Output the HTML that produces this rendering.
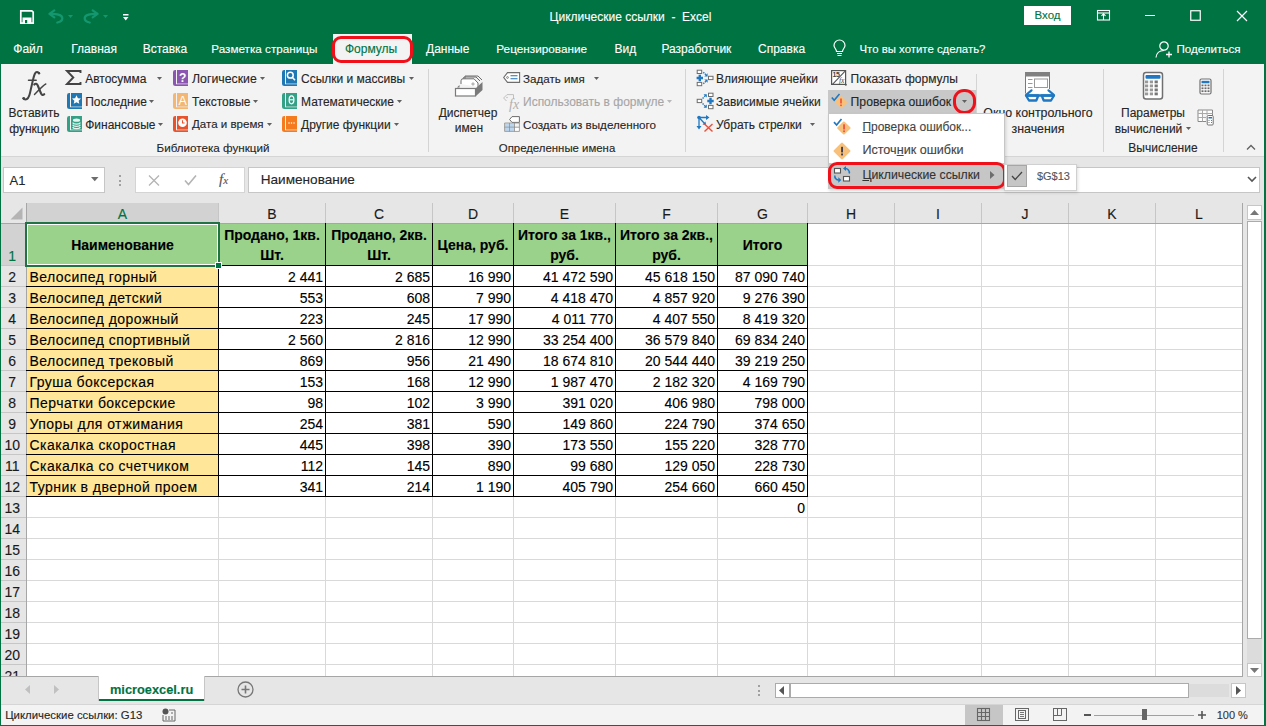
<!DOCTYPE html>
<html><head><meta charset="utf-8"><style>
html,body{margin:0;padding:0;}
body{width:1266px;height:726px;position:relative;overflow:hidden;background:#007342;font-family:"Liberation Sans",sans-serif;}
.t{position:absolute;white-space:nowrap;-webkit-text-stroke:0.12px currentColor;}
.r{position:absolute;}
svg.r{overflow:visible;}
</style></head><body>
<div class="t" style="top:8.50px;line-height:16px;font-size:12px;color:white;left:430.50px;width:400px;text-align:center;">Циклические ссылки&nbsp; -&nbsp; Excel</div>
<div class="r" style="left:1024px;top:6px;width:47px;height:19px;background:#ffffff;"></div>
<div class="t" style="top:8.00px;line-height:15px;font-size:11.5px;color:#007342;left:1024.00px;width:47px;text-align:center;">Вход</div>
<div class="r" style="left:333px;top:34px;width:79px;height:30px;background:#f3f3f3;"></div>
<div class="t" style="top:41.00px;line-height:16px;font-size:12px;color:white;left:13.30px;">Файл</div>
<div class="t" style="top:41.00px;line-height:16px;font-size:12px;color:white;left:71.30px;">Главная</div>
<div class="t" style="top:41.00px;line-height:16px;font-size:12px;color:white;left:142.70px;">Вставка</div>
<div class="t" style="top:41.00px;line-height:16px;font-size:11.7px;color:white;left:211.30px;">Разметка страницы</div>
<div class="t" style="top:41.00px;line-height:16px;font-size:12px;color:#007342;left:345.00px;">Формулы</div>
<div class="t" style="top:41.00px;line-height:16px;font-size:12px;color:white;left:426.00px;">Данные</div>
<div class="t" style="top:41.00px;line-height:16px;font-size:11.75px;color:white;left:496.30px;">Рецензирование</div>
<div class="t" style="top:41.00px;line-height:16px;font-size:12px;color:white;left:614.50px;">Вид</div>
<div class="t" style="top:41.00px;line-height:16px;font-size:12px;color:white;left:661.40px;">Разработчик</div>
<div class="t" style="top:41.00px;line-height:16px;font-size:12px;color:white;left:758.00px;">Справка</div>
<div class="t" style="top:41.50px;line-height:15px;font-size:11.4px;color:white;left:859.50px;">Что вы хотите сделать?</div>
<div class="t" style="top:41.00px;line-height:16px;font-size:11.6px;color:white;left:1176.50px;">Поделиться</div>
<div class="r" style="left:1px;top:64px;width:1263px;height:92px;background:#f3f3f3;"></div>
<div class="r" style="left:1px;top:156px;width:1263px;height:1px;background:#d5d5d5;"></div>
<div class="r" style="left:1px;top:157px;width:1263px;height:547px;background:#e6e6e6;"></div>
<div class="r" style="left:3px;top:167px;width:102px;height:26px;background:#ffffff;border:1px solid #c6c6c6;box-sizing:border-box;"></div>
<div class="t" style="top:171.80px;line-height:17px;font-size:13px;color:#262626;left:9.50px;">A1</div>
<div class="r" style="left:135px;top:167px;width:110px;height:26px;background:#ffffff;border:1px solid #d4d4d4;box-sizing:border-box;"></div>
<div class="r" style="left:248px;top:167px;width:1012px;height:26px;background:#ffffff;border:1px solid #c6c6c6;box-sizing:border-box;"></div>
<div class="t" style="top:171.30px;line-height:18px;font-size:13.6px;color:#262626;left:260.70px;">Наименование</div>
<div class="r" style="left:27px;top:224px;width:1215px;height:452px;background:#ffffff;"></div>
<div class="r" style="left:1px;top:203px;width:1242px;height:20px;background:#e6e6e6;"></div>
<div class="r" style="left:27px;top:203px;width:191px;height:20px;background:#d2d2d2;"></div>
<div class="r" style="left:1px;top:224px;width:25px;height:452px;background:#e6e6e6;"></div>
<div class="r" style="left:1px;top:224px;width:25px;height:41px;background:#d2d2d2;"></div>
<div class="r" style="left:218px;top:224px;width:1px;height:452px;background:#d9d9d9;"></div>
<div class="r" style="left:218px;top:203px;width:1px;height:20px;background:#c6c6c6;"></div>
<div class="r" style="left:325px;top:224px;width:1px;height:452px;background:#d9d9d9;"></div>
<div class="r" style="left:325px;top:203px;width:1px;height:20px;background:#c6c6c6;"></div>
<div class="r" style="left:432px;top:224px;width:1px;height:452px;background:#d9d9d9;"></div>
<div class="r" style="left:432px;top:203px;width:1px;height:20px;background:#c6c6c6;"></div>
<div class="r" style="left:513px;top:224px;width:1px;height:452px;background:#d9d9d9;"></div>
<div class="r" style="left:513px;top:203px;width:1px;height:20px;background:#c6c6c6;"></div>
<div class="r" style="left:615px;top:224px;width:1px;height:452px;background:#d9d9d9;"></div>
<div class="r" style="left:615px;top:203px;width:1px;height:20px;background:#c6c6c6;"></div>
<div class="r" style="left:717px;top:224px;width:1px;height:452px;background:#d9d9d9;"></div>
<div class="r" style="left:717px;top:203px;width:1px;height:20px;background:#c6c6c6;"></div>
<div class="r" style="left:807px;top:224px;width:1px;height:452px;background:#d9d9d9;"></div>
<div class="r" style="left:807px;top:203px;width:1px;height:20px;background:#c6c6c6;"></div>
<div class="r" style="left:894px;top:224px;width:1px;height:452px;background:#d9d9d9;"></div>
<div class="r" style="left:894px;top:203px;width:1px;height:20px;background:#c6c6c6;"></div>
<div class="r" style="left:981px;top:224px;width:1px;height:452px;background:#d9d9d9;"></div>
<div class="r" style="left:981px;top:203px;width:1px;height:20px;background:#c6c6c6;"></div>
<div class="r" style="left:1068px;top:224px;width:1px;height:452px;background:#d9d9d9;"></div>
<div class="r" style="left:1068px;top:203px;width:1px;height:20px;background:#c6c6c6;"></div>
<div class="r" style="left:1155px;top:224px;width:1px;height:452px;background:#d9d9d9;"></div>
<div class="r" style="left:1155px;top:203px;width:1px;height:20px;background:#c6c6c6;"></div>
<div class="r" style="left:1242px;top:224px;width:1px;height:452px;background:#d9d9d9;"></div>
<div class="r" style="left:1242px;top:203px;width:1px;height:20px;background:#c6c6c6;"></div>
<div class="r" style="left:26px;top:203px;width:1px;height:473px;background:#a6a6a6;"></div>
<div class="r" style="left:27px;top:265px;width:1215px;height:1px;background:#d9d9d9;"></div>
<div class="r" style="left:1px;top:265px;width:25px;height:1px;background:#c6c6c6;"></div>
<div class="r" style="left:27px;top:286px;width:1215px;height:1px;background:#d9d9d9;"></div>
<div class="r" style="left:1px;top:286px;width:25px;height:1px;background:#c6c6c6;"></div>
<div class="r" style="left:27px;top:307px;width:1215px;height:1px;background:#d9d9d9;"></div>
<div class="r" style="left:1px;top:307px;width:25px;height:1px;background:#c6c6c6;"></div>
<div class="r" style="left:27px;top:328px;width:1215px;height:1px;background:#d9d9d9;"></div>
<div class="r" style="left:1px;top:328px;width:25px;height:1px;background:#c6c6c6;"></div>
<div class="r" style="left:27px;top:349px;width:1215px;height:1px;background:#d9d9d9;"></div>
<div class="r" style="left:1px;top:349px;width:25px;height:1px;background:#c6c6c6;"></div>
<div class="r" style="left:27px;top:370px;width:1215px;height:1px;background:#d9d9d9;"></div>
<div class="r" style="left:1px;top:370px;width:25px;height:1px;background:#c6c6c6;"></div>
<div class="r" style="left:27px;top:391px;width:1215px;height:1px;background:#d9d9d9;"></div>
<div class="r" style="left:1px;top:391px;width:25px;height:1px;background:#c6c6c6;"></div>
<div class="r" style="left:27px;top:412px;width:1215px;height:1px;background:#d9d9d9;"></div>
<div class="r" style="left:1px;top:412px;width:25px;height:1px;background:#c6c6c6;"></div>
<div class="r" style="left:27px;top:433px;width:1215px;height:1px;background:#d9d9d9;"></div>
<div class="r" style="left:1px;top:433px;width:25px;height:1px;background:#c6c6c6;"></div>
<div class="r" style="left:27px;top:454px;width:1215px;height:1px;background:#d9d9d9;"></div>
<div class="r" style="left:1px;top:454px;width:25px;height:1px;background:#c6c6c6;"></div>
<div class="r" style="left:27px;top:475px;width:1215px;height:1px;background:#d9d9d9;"></div>
<div class="r" style="left:1px;top:475px;width:25px;height:1px;background:#c6c6c6;"></div>
<div class="r" style="left:27px;top:496px;width:1215px;height:1px;background:#d9d9d9;"></div>
<div class="r" style="left:1px;top:496px;width:25px;height:1px;background:#c6c6c6;"></div>
<div class="r" style="left:27px;top:517px;width:1215px;height:1px;background:#d9d9d9;"></div>
<div class="r" style="left:1px;top:517px;width:25px;height:1px;background:#c6c6c6;"></div>
<div class="r" style="left:27px;top:538px;width:1215px;height:1px;background:#d9d9d9;"></div>
<div class="r" style="left:1px;top:538px;width:25px;height:1px;background:#c6c6c6;"></div>
<div class="r" style="left:27px;top:559px;width:1215px;height:1px;background:#d9d9d9;"></div>
<div class="r" style="left:1px;top:559px;width:25px;height:1px;background:#c6c6c6;"></div>
<div class="r" style="left:27px;top:580px;width:1215px;height:1px;background:#d9d9d9;"></div>
<div class="r" style="left:1px;top:580px;width:25px;height:1px;background:#c6c6c6;"></div>
<div class="r" style="left:27px;top:601px;width:1215px;height:1px;background:#d9d9d9;"></div>
<div class="r" style="left:1px;top:601px;width:25px;height:1px;background:#c6c6c6;"></div>
<div class="r" style="left:27px;top:622px;width:1215px;height:1px;background:#d9d9d9;"></div>
<div class="r" style="left:1px;top:622px;width:25px;height:1px;background:#c6c6c6;"></div>
<div class="r" style="left:27px;top:643px;width:1215px;height:1px;background:#d9d9d9;"></div>
<div class="r" style="left:1px;top:643px;width:25px;height:1px;background:#c6c6c6;"></div>
<div class="r" style="left:27px;top:664px;width:1215px;height:1px;background:#d9d9d9;"></div>
<div class="r" style="left:1px;top:664px;width:25px;height:1px;background:#c6c6c6;"></div>
<div class="r" style="left:1px;top:223px;width:1242px;height:1px;background:#a6a6a6;"></div>
<div class="t" style="top:204.70px;line-height:19px;font-size:14px;color:#007342;left:82.50px;width:80px;text-align:center;">A</div>
<div class="t" style="top:204.70px;line-height:19px;font-size:14px;color:#1a1a1a;left:232.00px;width:80px;text-align:center;">B</div>
<div class="t" style="top:204.70px;line-height:19px;font-size:14px;color:#1a1a1a;left:339.00px;width:80px;text-align:center;">C</div>
<div class="t" style="top:204.70px;line-height:19px;font-size:14px;color:#1a1a1a;left:433.00px;width:80px;text-align:center;">D</div>
<div class="t" style="top:204.70px;line-height:19px;font-size:14px;color:#1a1a1a;left:524.50px;width:80px;text-align:center;">E</div>
<div class="t" style="top:204.70px;line-height:19px;font-size:14px;color:#1a1a1a;left:626.50px;width:80px;text-align:center;">F</div>
<div class="t" style="top:204.70px;line-height:19px;font-size:14px;color:#1a1a1a;left:722.50px;width:80px;text-align:center;">G</div>
<div class="t" style="top:204.70px;line-height:19px;font-size:14px;color:#1a1a1a;left:811.00px;width:80px;text-align:center;">H</div>
<div class="t" style="top:204.70px;line-height:19px;font-size:14px;color:#1a1a1a;left:898.00px;width:80px;text-align:center;">I</div>
<div class="t" style="top:204.70px;line-height:19px;font-size:14px;color:#1a1a1a;left:985.00px;width:80px;text-align:center;">J</div>
<div class="t" style="top:204.70px;line-height:19px;font-size:14px;color:#1a1a1a;left:1072.00px;width:80px;text-align:center;">K</div>
<div class="t" style="top:204.70px;line-height:19px;font-size:14px;color:#1a1a1a;left:1159.00px;width:80px;text-align:center;">L</div>
<div class="t" style="top:246.50px;line-height:19px;font-size:14px;color:#007342;left:0.20px;width:24px;text-align:center;">1</div>
<div class="t" style="top:267.80px;line-height:19px;font-size:14px;color:#1a1a1a;left:0.20px;width:24px;text-align:center;">2</div>
<div class="t" style="top:288.80px;line-height:19px;font-size:14px;color:#1a1a1a;left:0.20px;width:24px;text-align:center;">3</div>
<div class="t" style="top:309.80px;line-height:19px;font-size:14px;color:#1a1a1a;left:0.20px;width:24px;text-align:center;">4</div>
<div class="t" style="top:330.80px;line-height:19px;font-size:14px;color:#1a1a1a;left:0.20px;width:24px;text-align:center;">5</div>
<div class="t" style="top:351.80px;line-height:19px;font-size:14px;color:#1a1a1a;left:0.20px;width:24px;text-align:center;">6</div>
<div class="t" style="top:372.80px;line-height:19px;font-size:14px;color:#1a1a1a;left:0.20px;width:24px;text-align:center;">7</div>
<div class="t" style="top:393.80px;line-height:19px;font-size:14px;color:#1a1a1a;left:0.20px;width:24px;text-align:center;">8</div>
<div class="t" style="top:414.80px;line-height:19px;font-size:14px;color:#1a1a1a;left:0.20px;width:24px;text-align:center;">9</div>
<div class="t" style="top:435.80px;line-height:19px;font-size:14px;color:#1a1a1a;left:0.20px;width:24px;text-align:center;">10</div>
<div class="t" style="top:456.80px;line-height:19px;font-size:14px;color:#1a1a1a;left:0.20px;width:24px;text-align:center;">11</div>
<div class="t" style="top:477.80px;line-height:19px;font-size:14px;color:#1a1a1a;left:0.20px;width:24px;text-align:center;">12</div>
<div class="t" style="top:498.80px;line-height:19px;font-size:14px;color:#1a1a1a;left:0.20px;width:24px;text-align:center;">13</div>
<div class="t" style="top:519.80px;line-height:19px;font-size:14px;color:#1a1a1a;left:0.20px;width:24px;text-align:center;">14</div>
<div class="t" style="top:540.80px;line-height:19px;font-size:14px;color:#1a1a1a;left:0.20px;width:24px;text-align:center;">15</div>
<div class="t" style="top:561.80px;line-height:19px;font-size:14px;color:#1a1a1a;left:0.20px;width:24px;text-align:center;">16</div>
<div class="t" style="top:582.80px;line-height:19px;font-size:14px;color:#1a1a1a;left:0.20px;width:24px;text-align:center;">17</div>
<div class="t" style="top:603.80px;line-height:19px;font-size:14px;color:#1a1a1a;left:0.20px;width:24px;text-align:center;">18</div>
<div class="t" style="top:624.80px;line-height:19px;font-size:14px;color:#1a1a1a;left:0.20px;width:24px;text-align:center;">19</div>
<div class="t" style="top:645.80px;line-height:19px;font-size:14px;color:#1a1a1a;left:0.20px;width:24px;text-align:center;">20</div>
<div class="t" style="top:666.80px;line-height:19px;font-size:14px;color:#1a1a1a;left:0.20px;width:24px;text-align:center;">21</div>
<div class="r" style="left:27px;top:224px;width:781px;height:41px;background:#9ad18b;"></div>
<div class="r" style="left:27px;top:266px;width:191px;height:20px;background:#ffe699;"></div>
<div class="r" style="left:27px;top:287px;width:191px;height:20px;background:#ffe699;"></div>
<div class="r" style="left:27px;top:308px;width:191px;height:20px;background:#ffe699;"></div>
<div class="r" style="left:27px;top:329px;width:191px;height:20px;background:#ffe699;"></div>
<div class="r" style="left:27px;top:350px;width:191px;height:20px;background:#ffe699;"></div>
<div class="r" style="left:27px;top:371px;width:191px;height:20px;background:#ffe699;"></div>
<div class="r" style="left:27px;top:392px;width:191px;height:20px;background:#ffe699;"></div>
<div class="r" style="left:27px;top:413px;width:191px;height:20px;background:#ffe699;"></div>
<div class="r" style="left:27px;top:434px;width:191px;height:20px;background:#ffe699;"></div>
<div class="r" style="left:27px;top:455px;width:191px;height:20px;background:#ffe699;"></div>
<div class="r" style="left:27px;top:476px;width:191px;height:20px;background:#ffe699;"></div>
<div class="r" style="left:218px;top:223px;width:1px;height:274px;background:#000000;"></div>
<div class="r" style="left:325px;top:223px;width:1px;height:274px;background:#000000;"></div>
<div class="r" style="left:432px;top:223px;width:1px;height:274px;background:#000000;"></div>
<div class="r" style="left:513px;top:223px;width:1px;height:274px;background:#000000;"></div>
<div class="r" style="left:615px;top:223px;width:1px;height:274px;background:#000000;"></div>
<div class="r" style="left:717px;top:223px;width:1px;height:274px;background:#000000;"></div>
<div class="r" style="left:807px;top:223px;width:1px;height:274px;background:#000000;"></div>
<div class="r" style="left:26px;top:265px;width:782px;height:1px;background:#000000;"></div>
<div class="r" style="left:26px;top:286px;width:782px;height:1px;background:#000000;"></div>
<div class="r" style="left:26px;top:307px;width:782px;height:1px;background:#000000;"></div>
<div class="r" style="left:26px;top:328px;width:782px;height:1px;background:#000000;"></div>
<div class="r" style="left:26px;top:349px;width:782px;height:1px;background:#000000;"></div>
<div class="r" style="left:26px;top:370px;width:782px;height:1px;background:#000000;"></div>
<div class="r" style="left:26px;top:391px;width:782px;height:1px;background:#000000;"></div>
<div class="r" style="left:26px;top:412px;width:782px;height:1px;background:#000000;"></div>
<div class="r" style="left:26px;top:433px;width:782px;height:1px;background:#000000;"></div>
<div class="r" style="left:26px;top:454px;width:782px;height:1px;background:#000000;"></div>
<div class="r" style="left:26px;top:475px;width:782px;height:1px;background:#000000;"></div>
<div class="r" style="left:26px;top:496px;width:782px;height:1px;background:#000000;"></div>
<div class="t" style="top:268.00px;line-height:19px;font-size:14px;color:#000;letter-spacing:0.45px;left:29.50px;">Велосипед горный</div>
<div class="t" style="top:268.00px;line-height:19px;font-size:14px;color:#000;left:203.00px;width:120px;text-align:right;">2 441</div>
<div class="t" style="top:268.00px;line-height:19px;font-size:14px;color:#000;left:310.00px;width:120px;text-align:right;">2 685</div>
<div class="t" style="top:268.00px;line-height:19px;font-size:14px;color:#000;left:391.00px;width:120px;text-align:right;">16 990</div>
<div class="t" style="top:268.00px;line-height:19px;font-size:14px;color:#000;left:493.00px;width:120px;text-align:right;">41 472 590</div>
<div class="t" style="top:268.00px;line-height:19px;font-size:14px;color:#000;left:595.00px;width:120px;text-align:right;">45 618 150</div>
<div class="t" style="top:268.00px;line-height:19px;font-size:14px;color:#000;left:685.00px;width:120px;text-align:right;">87 090 740</div>
<div class="t" style="top:289.00px;line-height:19px;font-size:14px;color:#000;letter-spacing:0.45px;left:29.50px;">Велосипед детский</div>
<div class="t" style="top:289.00px;line-height:19px;font-size:14px;color:#000;left:203.00px;width:120px;text-align:right;">553</div>
<div class="t" style="top:289.00px;line-height:19px;font-size:14px;color:#000;left:310.00px;width:120px;text-align:right;">608</div>
<div class="t" style="top:289.00px;line-height:19px;font-size:14px;color:#000;left:391.00px;width:120px;text-align:right;">7 990</div>
<div class="t" style="top:289.00px;line-height:19px;font-size:14px;color:#000;left:493.00px;width:120px;text-align:right;">4 418 470</div>
<div class="t" style="top:289.00px;line-height:19px;font-size:14px;color:#000;left:595.00px;width:120px;text-align:right;">4 857 920</div>
<div class="t" style="top:289.00px;line-height:19px;font-size:14px;color:#000;left:685.00px;width:120px;text-align:right;">9 276 390</div>
<div class="t" style="top:310.00px;line-height:19px;font-size:14px;color:#000;letter-spacing:0.45px;left:29.50px;">Велосипед дорожный</div>
<div class="t" style="top:310.00px;line-height:19px;font-size:14px;color:#000;left:203.00px;width:120px;text-align:right;">223</div>
<div class="t" style="top:310.00px;line-height:19px;font-size:14px;color:#000;left:310.00px;width:120px;text-align:right;">245</div>
<div class="t" style="top:310.00px;line-height:19px;font-size:14px;color:#000;left:391.00px;width:120px;text-align:right;">17 990</div>
<div class="t" style="top:310.00px;line-height:19px;font-size:14px;color:#000;left:493.00px;width:120px;text-align:right;">4 011 770</div>
<div class="t" style="top:310.00px;line-height:19px;font-size:14px;color:#000;left:595.00px;width:120px;text-align:right;">4 407 550</div>
<div class="t" style="top:310.00px;line-height:19px;font-size:14px;color:#000;left:685.00px;width:120px;text-align:right;">8 419 320</div>
<div class="t" style="top:331.00px;line-height:19px;font-size:14px;color:#000;letter-spacing:0.45px;left:29.50px;">Велосипед спортивный</div>
<div class="t" style="top:331.00px;line-height:19px;font-size:14px;color:#000;left:203.00px;width:120px;text-align:right;">2 560</div>
<div class="t" style="top:331.00px;line-height:19px;font-size:14px;color:#000;left:310.00px;width:120px;text-align:right;">2 816</div>
<div class="t" style="top:331.00px;line-height:19px;font-size:14px;color:#000;left:391.00px;width:120px;text-align:right;">12 990</div>
<div class="t" style="top:331.00px;line-height:19px;font-size:14px;color:#000;left:493.00px;width:120px;text-align:right;">33 254 400</div>
<div class="t" style="top:331.00px;line-height:19px;font-size:14px;color:#000;left:595.00px;width:120px;text-align:right;">36 579 840</div>
<div class="t" style="top:331.00px;line-height:19px;font-size:14px;color:#000;left:685.00px;width:120px;text-align:right;">69 834 240</div>
<div class="t" style="top:352.00px;line-height:19px;font-size:14px;color:#000;letter-spacing:0.45px;left:29.50px;">Велосипед трековый</div>
<div class="t" style="top:352.00px;line-height:19px;font-size:14px;color:#000;left:203.00px;width:120px;text-align:right;">869</div>
<div class="t" style="top:352.00px;line-height:19px;font-size:14px;color:#000;left:310.00px;width:120px;text-align:right;">956</div>
<div class="t" style="top:352.00px;line-height:19px;font-size:14px;color:#000;left:391.00px;width:120px;text-align:right;">21 490</div>
<div class="t" style="top:352.00px;line-height:19px;font-size:14px;color:#000;left:493.00px;width:120px;text-align:right;">18 674 810</div>
<div class="t" style="top:352.00px;line-height:19px;font-size:14px;color:#000;left:595.00px;width:120px;text-align:right;">20 544 440</div>
<div class="t" style="top:352.00px;line-height:19px;font-size:14px;color:#000;left:685.00px;width:120px;text-align:right;">39 219 250</div>
<div class="t" style="top:373.00px;line-height:19px;font-size:14px;color:#000;letter-spacing:0.45px;left:29.50px;">Груша боксерская</div>
<div class="t" style="top:373.00px;line-height:19px;font-size:14px;color:#000;left:203.00px;width:120px;text-align:right;">153</div>
<div class="t" style="top:373.00px;line-height:19px;font-size:14px;color:#000;left:310.00px;width:120px;text-align:right;">168</div>
<div class="t" style="top:373.00px;line-height:19px;font-size:14px;color:#000;left:391.00px;width:120px;text-align:right;">12 990</div>
<div class="t" style="top:373.00px;line-height:19px;font-size:14px;color:#000;left:493.00px;width:120px;text-align:right;">1 987 470</div>
<div class="t" style="top:373.00px;line-height:19px;font-size:14px;color:#000;left:595.00px;width:120px;text-align:right;">2 182 320</div>
<div class="t" style="top:373.00px;line-height:19px;font-size:14px;color:#000;left:685.00px;width:120px;text-align:right;">4 169 790</div>
<div class="t" style="top:394.00px;line-height:19px;font-size:14px;color:#000;letter-spacing:0.45px;left:29.50px;">Перчатки боксерские</div>
<div class="t" style="top:394.00px;line-height:19px;font-size:14px;color:#000;left:203.00px;width:120px;text-align:right;">98</div>
<div class="t" style="top:394.00px;line-height:19px;font-size:14px;color:#000;left:310.00px;width:120px;text-align:right;">102</div>
<div class="t" style="top:394.00px;line-height:19px;font-size:14px;color:#000;left:391.00px;width:120px;text-align:right;">3 990</div>
<div class="t" style="top:394.00px;line-height:19px;font-size:14px;color:#000;left:493.00px;width:120px;text-align:right;">391 020</div>
<div class="t" style="top:394.00px;line-height:19px;font-size:14px;color:#000;left:595.00px;width:120px;text-align:right;">406 980</div>
<div class="t" style="top:394.00px;line-height:19px;font-size:14px;color:#000;left:685.00px;width:120px;text-align:right;">798 000</div>
<div class="t" style="top:415.00px;line-height:19px;font-size:14px;color:#000;letter-spacing:0.45px;left:29.50px;">Упоры для отжимания</div>
<div class="t" style="top:415.00px;line-height:19px;font-size:14px;color:#000;left:203.00px;width:120px;text-align:right;">254</div>
<div class="t" style="top:415.00px;line-height:19px;font-size:14px;color:#000;left:310.00px;width:120px;text-align:right;">381</div>
<div class="t" style="top:415.00px;line-height:19px;font-size:14px;color:#000;left:391.00px;width:120px;text-align:right;">590</div>
<div class="t" style="top:415.00px;line-height:19px;font-size:14px;color:#000;left:493.00px;width:120px;text-align:right;">149 860</div>
<div class="t" style="top:415.00px;line-height:19px;font-size:14px;color:#000;left:595.00px;width:120px;text-align:right;">224 790</div>
<div class="t" style="top:415.00px;line-height:19px;font-size:14px;color:#000;left:685.00px;width:120px;text-align:right;">374 650</div>
<div class="t" style="top:436.00px;line-height:19px;font-size:14px;color:#000;letter-spacing:0.45px;left:29.50px;">Скакалка скоростная</div>
<div class="t" style="top:436.00px;line-height:19px;font-size:14px;color:#000;left:203.00px;width:120px;text-align:right;">445</div>
<div class="t" style="top:436.00px;line-height:19px;font-size:14px;color:#000;left:310.00px;width:120px;text-align:right;">398</div>
<div class="t" style="top:436.00px;line-height:19px;font-size:14px;color:#000;left:391.00px;width:120px;text-align:right;">390</div>
<div class="t" style="top:436.00px;line-height:19px;font-size:14px;color:#000;left:493.00px;width:120px;text-align:right;">173 550</div>
<div class="t" style="top:436.00px;line-height:19px;font-size:14px;color:#000;left:595.00px;width:120px;text-align:right;">155 220</div>
<div class="t" style="top:436.00px;line-height:19px;font-size:14px;color:#000;left:685.00px;width:120px;text-align:right;">328 770</div>
<div class="t" style="top:457.00px;line-height:19px;font-size:14px;color:#000;letter-spacing:0.45px;left:29.50px;">Скакалка со счетчиком</div>
<div class="t" style="top:457.00px;line-height:19px;font-size:14px;color:#000;left:203.00px;width:120px;text-align:right;">112</div>
<div class="t" style="top:457.00px;line-height:19px;font-size:14px;color:#000;left:310.00px;width:120px;text-align:right;">145</div>
<div class="t" style="top:457.00px;line-height:19px;font-size:14px;color:#000;left:391.00px;width:120px;text-align:right;">890</div>
<div class="t" style="top:457.00px;line-height:19px;font-size:14px;color:#000;left:493.00px;width:120px;text-align:right;">99 680</div>
<div class="t" style="top:457.00px;line-height:19px;font-size:14px;color:#000;left:595.00px;width:120px;text-align:right;">129 050</div>
<div class="t" style="top:457.00px;line-height:19px;font-size:14px;color:#000;left:685.00px;width:120px;text-align:right;">228 730</div>
<div class="t" style="top:478.00px;line-height:19px;font-size:14px;color:#000;letter-spacing:0.45px;left:29.50px;">Турник в дверной проем</div>
<div class="t" style="top:478.00px;line-height:19px;font-size:14px;color:#000;left:203.00px;width:120px;text-align:right;">341</div>
<div class="t" style="top:478.00px;line-height:19px;font-size:14px;color:#000;left:310.00px;width:120px;text-align:right;">214</div>
<div class="t" style="top:478.00px;line-height:19px;font-size:14px;color:#000;left:391.00px;width:120px;text-align:right;">1 190</div>
<div class="t" style="top:478.00px;line-height:19px;font-size:14px;color:#000;left:493.00px;width:120px;text-align:right;">405 790</div>
<div class="t" style="top:478.00px;line-height:19px;font-size:14px;color:#000;left:595.00px;width:120px;text-align:right;">254 660</div>
<div class="t" style="top:478.00px;line-height:19px;font-size:14px;color:#000;left:685.00px;width:120px;text-align:right;">660 450</div>
<div class="t" style="top:499.00px;line-height:19px;font-size:14px;color:#000;left:745.00px;width:60px;text-align:right;">0</div>
<div class="t" style="top:235.50px;line-height:19px;font-size:14px;color:#000;font-weight:bold;left:27.50px;width:190px;text-align:center;">Наименование</div>
<div class="t" style="top:225.50px;line-height:19px;font-size:14px;color:#000;font-weight:bold;left:212.00px;width:120px;text-align:center;">Продано, 1кв.</div>
<div class="t" style="top:246.30px;line-height:19px;font-size:14px;color:#000;font-weight:bold;left:212.00px;width:120px;text-align:center;">Шт.</div>
<div class="t" style="top:225.50px;line-height:19px;font-size:14px;color:#000;font-weight:bold;left:319.00px;width:120px;text-align:center;">Продано, 2кв.</div>
<div class="t" style="top:246.30px;line-height:19px;font-size:14px;color:#000;font-weight:bold;left:319.00px;width:120px;text-align:center;">Шт.</div>
<div class="t" style="top:235.50px;line-height:19px;font-size:14px;color:#000;font-weight:bold;left:413.00px;width:120px;text-align:center;">Цена, руб.</div>
<div class="t" style="top:225.50px;line-height:19px;font-size:14px;color:#000;font-weight:bold;left:504.50px;width:120px;text-align:center;">Итого за 1кв.,</div>
<div class="t" style="top:246.30px;line-height:19px;font-size:14px;color:#000;font-weight:bold;left:504.50px;width:120px;text-align:center;">руб.</div>
<div class="t" style="top:225.50px;line-height:19px;font-size:14px;color:#000;font-weight:bold;left:606.50px;width:120px;text-align:center;">Итого за 2кв.,</div>
<div class="t" style="top:246.30px;line-height:19px;font-size:14px;color:#000;font-weight:bold;left:606.50px;width:120px;text-align:center;">руб.</div>
<div class="t" style="top:235.50px;line-height:19px;font-size:14px;color:#000;font-weight:bold;left:702.50px;width:120px;text-align:center;">Итого</div>
<div class="r" style="left:25px;top:222px;width:195px;height:45px;border:2px solid #217346;box-sizing:border-box;"></div>
<div class="r" style="left:27px;top:224px;width:191px;height:41px;border:1px solid #ffffff;box-sizing:border-box;"></div>
<div class="r" style="left:215px;top:262px;width:7px;height:7px;background:#ffffff;"></div>
<div class="r" style="left:216px;top:263px;width:5px;height:5px;background:#007342;"></div>
<div class="r" style="left:1242px;top:203px;width:1px;height:474px;background:#a6a6a6;"></div>
<div class="r" style="left:1px;top:676px;width:1242px;height:1px;background:#a6a6a6;"></div>
<div class="r" style="left:1px;top:677px;width:1263px;height:27px;background:#e6e6e6;"></div>
<div class="r" style="left:98px;top:676px;width:107px;height:25px;background:#ffffff;border:1px solid #c6c6c6;border-top:none;box-sizing:border-box;"></div>
<div class="r" style="left:99px;top:699px;width:105px;height:2px;background:#007342;"></div>
<div class="t" style="top:681.30px;line-height:17px;font-size:12.8px;color:#007342;font-weight:bold;left:98.10px;width:107px;text-align:center;">microexcel.ru</div>
<div class="r" style="left:1px;top:704px;width:1263px;height:21px;background:#f3f3f3;"></div>
<div class="r" style="left:1px;top:704px;width:1263px;height:1px;background:#d5d5d5;"></div>
<div class="t" style="top:707.90px;line-height:15px;font-size:11.4px;color:#262626;left:5.20px;">Циклические ссылки: G13</div>
<div class="r" style="left:965px;top:705px;width:38px;height:20px;background:#c6c6c6;"></div>
<div class="t" style="top:707.50px;line-height:15px;font-size:11px;color:#333;left:1216.70px;">100 %</div>
<div class="t" style="top:105.30px;line-height:16px;font-size:12px;color:#262626;left:4.00px;width:60px;text-align:center;">Вставить</div>
<div class="t" style="top:121.00px;line-height:16px;font-size:12px;color:#262626;left:4.30px;width:60px;text-align:center;">функцию</div>
<div class="t" style="top:71.40px;line-height:16px;font-size:12px;color:#262626;left:85.20px;">Автосумма</div>
<div class="t" style="top:94.00px;line-height:16px;font-size:12px;color:#262626;left:85.20px;">Последние</div>
<div class="t" style="top:116.60px;line-height:16px;font-size:12px;color:#262626;left:85.20px;">Финансовые</div>
<div class="t" style="top:71.40px;line-height:16px;font-size:12.3px;color:#262626;left:192.00px;">Логические</div>
<div class="t" style="top:94.00px;line-height:16px;font-size:12px;color:#262626;left:192.00px;">Текстовые</div>
<div class="t" style="top:117.10px;line-height:15px;font-size:11.55px;color:#262626;left:192.00px;">Дата и время</div>
<div class="t" style="top:71.40px;line-height:16px;font-size:12px;color:#262626;left:301.00px;">Ссылки и массивы</div>
<div class="t" style="top:94.00px;line-height:16px;font-size:12px;color:#262626;left:301.00px;">Математические</div>
<div class="t" style="top:116.60px;line-height:16px;font-size:12px;color:#262626;left:301.00px;">Другие функции</div>
<div class="t" style="top:140.00px;line-height:16px;font-size:11.65px;color:#262626;left:133.00px;width:160px;text-align:center;">Библиотека функций</div>
<svg class="r" style="left:156.5px;top:77.4px;" width="5" height="3" viewBox="0 0 5 3"><path d="M0 0H5L2.5 3Z" fill="#606060"/></svg>
<svg class="r" style="left:148.6px;top:100px;" width="5" height="3" viewBox="0 0 5 3"><path d="M0 0H5L2.5 3Z" fill="#606060"/></svg>
<svg class="r" style="left:158px;top:122.6px;" width="5" height="3" viewBox="0 0 5 3"><path d="M0 0H5L2.5 3Z" fill="#606060"/></svg>
<svg class="r" style="left:260px;top:77.4px;" width="5" height="3" viewBox="0 0 5 3"><path d="M0 0H5L2.5 3Z" fill="#606060"/></svg>
<svg class="r" style="left:253px;top:100px;" width="5" height="3" viewBox="0 0 5 3"><path d="M0 0H5L2.5 3Z" fill="#606060"/></svg>
<svg class="r" style="left:267.3px;top:122.6px;" width="5" height="3" viewBox="0 0 5 3"><path d="M0 0H5L2.5 3Z" fill="#606060"/></svg>
<svg class="r" style="left:408.9px;top:77.4px;" width="5" height="3" viewBox="0 0 5 3"><path d="M0 0H5L2.5 3Z" fill="#606060"/></svg>
<svg class="r" style="left:397px;top:100px;" width="5" height="3" viewBox="0 0 5 3"><path d="M0 0H5L2.5 3Z" fill="#606060"/></svg>
<svg class="r" style="left:394px;top:122.6px;" width="5" height="3" viewBox="0 0 5 3"><path d="M0 0H5L2.5 3Z" fill="#606060"/></svg>
<div class="r" style="left:428px;top:69px;width:1px;height:83px;background:#d4d4d4;"></div>
<div class="t" style="top:105.30px;line-height:16px;font-size:12px;color:#262626;left:433.00px;width:70px;text-align:center;">Диспетчер</div>
<div class="t" style="top:120.40px;line-height:16px;font-size:12px;color:#262626;left:434.00px;width:70px;text-align:center;">имен</div>
<div class="t" style="top:71.40px;line-height:16px;font-size:11.6px;color:#262626;left:523.00px;">Задать имя</div>
<div class="t" style="top:94.00px;line-height:16px;font-size:12px;color:#a6a6a6;left:523.00px;">Использовать в формуле</div>
<div class="t" style="top:116.60px;line-height:16px;font-size:11.65px;color:#262626;left:523.00px;">Создать из выделенного</div>
<svg class="r" style="left:594px;top:77.4px;" width="5" height="3" viewBox="0 0 5 3"><path d="M0 0H5L2.5 3Z" fill="#606060"/></svg>
<svg class="r" style="left:667px;top:100px;" width="5" height="3" viewBox="0 0 5 3"><path d="M0 0H5L2.5 3Z" fill="#b8b8b8"/></svg>
<div class="t" style="top:140.50px;line-height:15px;font-size:11.4px;color:#262626;left:477.00px;width:160px;text-align:center;">Определенные имена</div>
<div class="r" style="left:685px;top:69px;width:1px;height:83px;background:#d4d4d4;"></div>
<div class="t" style="top:71.00px;line-height:16px;font-size:12px;color:#262626;left:716.00px;">Влияющие ячейки</div>
<div class="t" style="top:93.60px;line-height:16px;font-size:12px;color:#262626;left:716.00px;">Зависимые ячейки</div>
<div class="t" style="top:116.50px;line-height:16px;font-size:12px;color:#262626;left:716.00px;">Убрать стрелки</div>
<svg class="r" style="left:810px;top:122.5px;" width="5" height="3" viewBox="0 0 5 3"><path d="M0 0H5L2.5 3Z" fill="#606060"/></svg>
<div class="t" style="top:71.00px;line-height:16px;font-size:12px;color:#262626;left:850.60px;">Показать формулы</div>
<div class="r" style="left:828px;top:90px;width:148px;height:23px;background:#c8c8c8;"></div>
<div class="t" style="top:93.60px;line-height:16px;font-size:12.2px;color:#262626;left:850.60px;">Проверка ошибок</div>
<svg class="r" style="left:962px;top:99.6px;" width="5" height="3" viewBox="0 0 5 3"><path d="M0 0H5L2.5 3Z" fill="#606060"/></svg>
<div class="r" style="left:976px;top:74px;width:1px;height:78px;background:#d4d4d4;"></div>
<div class="t" style="top:104.70px;line-height:17px;font-size:12.4px;color:#262626;left:978.00px;width:120px;text-align:center;">Окно контрольного</div>
<div class="t" style="top:120.70px;line-height:17px;font-size:12.4px;color:#262626;left:978.00px;width:120px;text-align:center;">значения</div>
<div class="r" style="left:1103px;top:69px;width:1px;height:83px;background:#d4d4d4;"></div>
<div class="t" style="top:105.00px;line-height:16px;font-size:12px;color:#262626;left:1108.00px;width:90px;text-align:center;">Параметры</div>
<div class="t" style="top:121.00px;line-height:16px;font-size:12px;color:#262626;left:1103.50px;width:90px;text-align:center;">вычислений</div>
<svg class="r" style="left:1186px;top:127px;" width="5" height="3" viewBox="0 0 5 3"><path d="M0 0H5L2.5 3Z" fill="#606060"/></svg>
<div class="t" style="top:139.80px;line-height:16px;font-size:12px;color:#262626;left:1118.00px;width:90px;text-align:center;">Вычисление</div>
<div class="r" style="left:1223px;top:69px;width:1px;height:83px;background:#d4d4d4;"></div>
<svg class="r" style="left:1246px;top:144px;" width="10" height="6" viewBox="0 0 10 6"><path d="M1 5.5L5 1.5L9 5.5" fill="none" stroke="#606060" stroke-width="1.3"/></svg>
<svg class="r" style="left:19px;top:9px;" width="16" height="16" viewBox="0 0 16 16"><path d="M1.8 1.8H12.8L14.2 3.2V14.2H1.8Z" fill="none" stroke="#fff" stroke-width="1.7"/><rect x="3.5" y="8.5" width="9" height="5.7" fill="#fff"/><rect x="6" y="11" width="2.2" height="3.2" fill="#007342"/></svg>
<svg class="r" style="left:47px;top:9px;" width="18" height="15" viewBox="0 0 18 15"><path d="M7.3 1.4L2.4 4.9L7.3 8.4" fill="none" stroke="#14976f" stroke-width="2.2" stroke-linejoin="round" stroke-linecap="round"/><path d="M3 4.9C9 4.6 15.3 5.8 15.3 9.2C15.3 11.4 13 12.9 10.3 13.5" fill="none" stroke="#14976f" stroke-width="2.3" stroke-linecap="round"/></svg>
<svg class="r" style="left:68px;top:14.8px;" width="6" height="4" viewBox="0 0 6 4"><path d="M0 0H5L2.5 3Z" fill="#14976f"/></svg>
<svg class="r" style="left:82px;top:9px;" width="18" height="15" viewBox="0 0 18 15"><path d="M10.7 1.4L15.6 4.9L10.7 8.4" fill="none" stroke="#14976f" stroke-width="2.2" stroke-linejoin="round" stroke-linecap="round"/><path d="M15 4.9C9 4.6 2.7 5.8 2.7 9.2C2.7 11.4 5 12.9 7.7 13.5" fill="none" stroke="#14976f" stroke-width="2.3" stroke-linecap="round"/></svg>
<svg class="r" style="left:103px;top:14.8px;" width="6" height="4" viewBox="0 0 6 4"><path d="M0 0H5L2.5 3Z" fill="#14976f"/></svg>
<svg class="r" style="left:122.5px;top:13.5px;" width="6" height="7" viewBox="0 0 6 7"><rect x="0" y="0" width="5.5" height="1.5" fill="#fff"/><path d="M0 2.9H5.5L2.75 6.6Z" fill="#fff"/></svg>
<svg class="r" style="left:1097px;top:10px;" width="14" height="11" viewBox="0 0 14 11"><rect x="0.5" y="0.5" width="12" height="9.5" fill="none" stroke="#fff" stroke-width="1.1"/><path d="M0.5 3H12.5" stroke="#fff" stroke-width="1.1"/><path d="M6.5 3.2V10M4.5 5.8L6.5 3.8L8.5 5.8" fill="none" stroke="#fff" stroke-width="1.1"/></svg>
<div class="r" style="left:1145px;top:15px;width:10px;height:1px;background:#ffffff;"></div>
<svg class="r" style="left:1190px;top:10px;" width="11" height="11" viewBox="0 0 11 11"><rect x="0.75" y="0.75" width="9.5" height="9.5" fill="none" stroke="#fff" stroke-width="1.2"/></svg>
<svg class="r" style="left:1236px;top:10px;" width="12" height="12" viewBox="0 0 12 12"><path d="M1 1L11 11M11 1L1 11" stroke="#fff" stroke-width="1.2"/></svg>
<svg class="r" style="left:832px;top:40px;" width="15" height="17" viewBox="0 0 15 17"><path d="M4.5 11.5C4.5 9 2 8 2 5.5A5.5 5.5 0 0 1 13 5.5C13 8 10.5 9 10.5 11.5Z" fill="none" stroke="#fff" stroke-width="1.2"/><path d="M5 13.5H10M5.5 15.5H9.5" stroke="#fff" stroke-width="1.2"/></svg>
<svg class="r" style="left:1155px;top:41px;" width="19" height="17" viewBox="0 0 19 17"><circle cx="9" cy="5" r="4.2" fill="none" stroke="#fff" stroke-width="1.2"/><path d="M1 16.5C1.5 12 4.5 9.5 9 9.5" fill="none" stroke="#fff" stroke-width="1.2"/><path d="M14 10.5V16.5M11 13.5H17" stroke="#fff" stroke-width="1.3"/></svg>
<svg class="r" style="left:18px;top:68px;" width="32" height="36" viewBox="0 0 32 36"><g fill="none" stroke="#444" stroke-linecap="round"><path d="M21 5C20 3.5 18 3.5 17 5.5C16 7.5 15.3 10.5 14.6 13.5L12 25C11.2 28.5 10 31.5 7.5 31.5C6.3 31.5 5.5 31 5.3 30.5" stroke-width="2"/><path d="M10.5 12.2H18.2" stroke-width="1.5"/><path d="M16.3 16.5C17.5 15.2 18.9 15.6 19.7 17.4L23 25.4C23.8 27.2 25 27.4 26.2 26.2" stroke-width="2.2"/><path d="M27.8 16C26.3 16.5 21.3 21.5 16.5 26.5" stroke-width="1.4"/></g><circle cx="5.8" cy="30.3" r="1.3" fill="#444"/><circle cx="21" cy="5.3" r="1.2" fill="#444"/></svg>
<svg class="r" style="left:66px;top:70px;" width="16" height="16" viewBox="0 0 16 16"><path d="M14.5 3V1H1L7.3 7.5L1 14H14.5V12" fill="none" stroke="#444" stroke-width="1.9" stroke-linejoin="miter"/></svg>
<svg class="r" style="left:67px;top:93px;" width="15" height="16" viewBox="0 0 15 16"><path d="M3 0V14.3H15V16H2.5A2.5 2.5 0 0 1 0 13.5V2.2A2.2 2.2 0 0 1 2.2 0Z" fill="#1f78b4"/><rect x="4" y="0" width="11" height="13.6" fill="#1f78b4"/><path d="M9.5 2.3L10.9 5.3L14 5.6L11.6 7.7L12.3 10.8L9.5 9.2L6.7 10.8L7.4 7.7L5 5.6L8.1 5.3Z" fill="#fff"/></svg>
<svg class="r" style="left:66.5px;top:116px;" width="15" height="16" viewBox="0 0 15 16"><path d="M3 0V14.3H15V16H2.5A2.5 2.5 0 0 1 0 13.5V2.2A2.2 2.2 0 0 1 2.2 0Z" fill="#34a086"/><rect x="4" y="0" width="11" height="13.6" fill="#34a086"/><ellipse cx="9.5" cy="4.2" rx="3.6" ry="1.6" fill="#e8f4ef"/><path d="M5.9 6.5A3.6 1.6 0 0 0 13.1 6.5M5.9 8.8A3.6 1.6 0 0 0 13.1 8.8M5.9 11A3.6 1.6 0 0 0 13.1 11" fill="none" stroke="#e8f4ef" stroke-width="1.2"/></svg>
<svg class="r" style="left:173px;top:70px;" width="15" height="16" viewBox="0 0 15 16"><path d="M3 0V14.3H15V16H2.5A2.5 2.5 0 0 1 0 13.5V2.2A2.2 2.2 0 0 1 2.2 0Z" fill="#8b56b0"/><rect x="4" y="0" width="11" height="13.6" fill="#8b56b0"/><text x="9.6" y="11.5" text-anchor="middle" font-family="Liberation Sans" font-weight="bold" font-size="12" fill="#fff">?</text></svg>
<svg class="r" style="left:173px;top:93px;" width="15" height="16" viewBox="0 0 15 16"><path d="M3 0V14.3H15V16H2.5A2.5 2.5 0 0 1 0 13.5V2.2A2.2 2.2 0 0 1 2.2 0Z" fill="#f3b773"/><rect x="4" y="0" width="11" height="13.6" fill="#f3b773"/><text x="9.6" y="11.6" text-anchor="middle" font-family="Liberation Sans" font-size="12.5" fill="#fff">A</text></svg>
<svg class="r" style="left:173px;top:116px;" width="15" height="16" viewBox="0 0 15 16"><path d="M3 0V14.3H15V16H2.5A2.5 2.5 0 0 1 0 13.5V2.2A2.2 2.2 0 0 1 2.2 0Z" fill="#e9532b"/><rect x="4" y="0" width="11" height="13.6" fill="#e9532b"/><circle cx="9.5" cy="6.8" r="4.3" fill="#fff"/><path d="M9.5 4.3V7H11.6" fill="none" stroke="#e9532b" stroke-width="1.1"/></svg>
<svg class="r" style="left:282px;top:70px;" width="15" height="16" viewBox="0 0 15 16"><path d="M3 0V14.3H15V16H2.5A2.5 2.5 0 0 1 0 13.5V2.2A2.2 2.2 0 0 1 2.2 0Z" fill="#1f78b4"/><rect x="4" y="0" width="11" height="13.6" fill="#1f78b4"/><circle cx="8.3" cy="5.2" r="2.9" fill="none" stroke="#fff" stroke-width="1.5"/><path d="M10.3 7.3L13 10.2" stroke="#fff" stroke-width="1.6"/></svg>
<svg class="r" style="left:282px;top:93px;" width="15" height="16" viewBox="0 0 15 16"><path d="M3 0V14.3H15V16H2.5A2.5 2.5 0 0 1 0 13.5V2.2A2.2 2.2 0 0 1 2.2 0Z" fill="#34a086"/><rect x="4" y="0" width="11" height="13.6" fill="#34a086"/><ellipse cx="9.5" cy="6.8" rx="2.4" ry="4" fill="none" stroke="#fff" stroke-width="1.2"/><path d="M7.1 6.8H11.9" stroke="#fff" stroke-width="1.1"/></svg>
<svg class="r" style="left:282px;top:116px;" width="15" height="16" viewBox="0 0 15 16"><path d="M3 0V14.3H15V16H2.5A2.5 2.5 0 0 1 0 13.5V2.2A2.2 2.2 0 0 1 2.2 0Z" fill="#f57b1f"/><rect x="4" y="0" width="11" height="13.6" fill="#f57b1f"/><circle cx="7" cy="7" r="0.75" fill="#fff"/><circle cx="9.5" cy="7" r="0.75" fill="#fff"/><circle cx="12" cy="7" r="0.75" fill="#fff"/></svg>
<svg class="r" style="left:454px;top:75px;" width="30" height="23" viewBox="0 0 30 23"><path d="M9 7.5V4A2 2 0 0 1 11 2H22L26 6M11 4V1H24L28 5" fill="none" stroke="#6d6d6d" stroke-width="1"/><path d="M7 9V5.8A2 2 0 0 1 9 3.8H20L24 8V12" fill="#fff" stroke="#6d6d6d" stroke-width="1"/><circle cx="19" cy="9" r="1.1" fill="none" stroke="#888" stroke-width="0.8"/><path d="M3 12.5L5.5 10V12.5Z" fill="#777"/><rect x="1.5" y="13.5" width="20" height="7.5" fill="#fff" stroke="#7a7a7a" stroke-width="1.2"/><path d="M22 13L28.5 7V15L22 21Z" fill="#7a7a7a"/></svg>
<svg class="r" style="left:503px;top:72px;" width="18" height="12" viewBox="0 0 18 12"><path d="M4.5 0.6H16.6V10.4H4.5L0.7 5.5Z" fill="#fff" stroke="#6d6d6d" stroke-width="1.1"/><circle cx="4.5" cy="5.5" r="0.9" fill="none" stroke="#6d6d6d" stroke-width="0.8"/><path d="M7.5 3.8H14.5M7.5 6.8H14.5" stroke="#1f6fb5" stroke-width="1.1"/></svg>
<svg class="r" style="left:503px;top:94px;" width="18" height="16" viewBox="0 0 18 16"><path d="M4 0.6H10.5V5M4 0.6L0.6 4L3.5 7" fill="none" stroke="#c0c0c0" stroke-width="1"/><circle cx="4" cy="3.5" r="0.8" fill="#c0c0c0"/><text x="6" y="14.5" font-family="Liberation Serif" font-style="italic" font-size="14" fill="#b0b0b0">fx</text></svg>
<svg class="r" style="left:504px;top:116px;" width="17" height="16" viewBox="0 0 17 16"><path d="M8 0.6H15.4V6.4H8L5.6 3.5Z" fill="#fff" stroke="#6d6d6d" stroke-width="1"/><rect x="1" y="7.5" width="4" height="3.5" fill="#bcd6ee"/><rect x="6" y="7.5" width="4" height="3.5" fill="#bcd6ee"/><rect x="1" y="11.5" width="4" height="3.5" fill="#bcd6ee"/><rect x="6" y="11.5" width="4" height="3.5" fill="#bcd6ee"/><rect x="11" y="11.5" width="4" height="3.5" fill="#fff"/><path d="M0.6 7H15.4V15.4H0.6Z M5.5 7V15.4M10.5 7V15.4M0.6 11.2H15.4" fill="none" stroke="#8a8a8a" stroke-width="0.8"/></svg>
<svg class="r" style="left:696px;top:69px;" width="18" height="18" viewBox="0 0 18 18"><rect x="1.2" y="1.2" width="4.5" height="3.3" fill="#fff" stroke="#6d6d6d" stroke-width="1"/><rect x="1.2" y="13.4" width="4.5" height="3.3" fill="#fff" stroke="#6d6d6d" stroke-width="1"/><rect x="12.5" y="7.3" width="4.5" height="3.3" fill="#fff" stroke="#6d6d6d" stroke-width="1"/><path d="M3.8 5.8V12.2M0.6 9H7" stroke="#1f78c1" stroke-width="2.4"/><path d="M7.3 3.2L10.2 6.1M7.3 14.8L10.2 11.9" stroke="#1f78c1" stroke-width="1.4" stroke-dasharray="1.4 0.9"/><path d="M11.6 4.2V7.5H8.3Z M11.6 13.8V10.5H8.3Z" fill="#1f78c1"/></svg>
<svg class="r" style="left:696px;top:92px;" width="18" height="18" viewBox="0 0 18 18"><rect x="1.2" y="7.3" width="4.5" height="3.3" fill="#fff" stroke="#6d6d6d" stroke-width="1"/><rect x="12.5" y="1.2" width="4.5" height="3.3" fill="#fff" stroke="#6d6d6d" stroke-width="1"/><rect x="12.5" y="13.4" width="4.5" height="3.3" fill="#fff" stroke="#6d6d6d" stroke-width="1"/><path d="M14.5 5.8V12.2M11.3 9H17.7" stroke="#1f78c1" stroke-width="2.4"/><path d="M6.6 6.4L9.3 3.7M6.6 11.6L9.3 14.3" stroke="#1f78c1" stroke-width="1.4" stroke-dasharray="1.4 0.9"/><path d="M10.8 2.2H7.5L10.8 5.5Z M10.8 15.8H7.5L10.8 12.5Z" fill="#1f78c1"/></svg>
<svg class="r" style="left:696px;top:115px;" width="18" height="18" viewBox="0 0 18 18"><circle cx="3" cy="2.5" r="1.8" fill="#1f78c1"/><path d="M3 2.5H12M3 2.5V12.5M3 2.5L9 9" stroke="#1f78c1" stroke-width="1.3"/><path d="M10 0L13.5 2.5L10 5Z M0.5 11L3 14.5L5.5 11Z M9.5 6.5L10 10L6.5 9.5Z" fill="#1f78c1"/><path d="M8.5 9L16.5 16.5M16.5 9L8.5 16.5" stroke="#f04e37" stroke-width="1.4"/></svg>
<svg class="r" style="left:831px;top:70px;" width="17" height="17" viewBox="0 0 17 17"><rect x="0.6" y="0.6" width="14" height="13.8" fill="#fff" stroke="#555" stroke-width="1.2"/><path d="M14.6 0.6L1.5 14.4" stroke="#555" stroke-width="1.1"/><text x="1.6" y="7.2" font-family="Liberation Sans" font-weight="bold" font-size="7" fill="#444" letter-spacing="-0.6">15</text><text x="8" y="13" font-family="Liberation Serif" font-style="italic" font-size="7.5" fill="#444">fx</text><circle cx="14.8" cy="14.8" r="1" fill="#555"/></svg>
<svg class="r" style="left:830.5px;top:93px;" width="17" height="17" viewBox="0 0 17 17"><path d="M0.8 4.5L3.2 7.2L8.5 1" fill="none" stroke="#1f78c1" stroke-width="1.6"/><path d="M10 3.5L15.5 9L10 14.5L4.5 9Z" fill="#f8c17b" stroke="#f8c17b" stroke-width="1.5" stroke-linejoin="round"/><rect x="9.2" y="5.5" width="1.6" height="5" fill="#ef4b3b"/><rect x="9.2" y="11.5" width="1.6" height="1.6" fill="#ef4b3b"/></svg>
<svg class="r" style="left:1024px;top:71px;" width="32" height="32" viewBox="0 0 32 32"><rect x="1.5" y="1.5" width="24" height="21" fill="#fff"/><path d="M1.5 1V22.5M25.5 1V18" stroke="#7a7a7a" stroke-width="1"/><rect x="1" y="1" width="25" height="4.5" fill="#808080"/><path d="M4 8.5H8.5M4 12.5H8.5M4 16.5H8.5" stroke="#999" stroke-width="1"/><rect x="10.5" y="8" width="13" height="8.5" fill="#fff" stroke="#9a9a9a" stroke-width="1"/><path d="M2.5 23.5L7.5 19.3M29.5 23.5L24.5 19.3" stroke="#1f78c1" stroke-width="2.2" stroke-linecap="round"/><path d="M2 24.5L5 29.5H12.3L14.3 24.5Z M17.7 24.5L19.7 29.5H27L30 24.5Z" fill="#fff" stroke="#1f78c1" stroke-width="2.3" stroke-linejoin="round"/><path d="M1.5 24.5H30.5" stroke="#1f78c1" stroke-width="2.5"/></svg>
<svg class="r" style="left:1142px;top:71px;" width="22" height="30" viewBox="0 0 22 30"><rect x="1.5" y="1.5" width="19" height="26.5" rx="2.5" fill="#fff" stroke="#707070" stroke-width="1.5"/><rect x="3.5" y="4" width="15" height="3.8" rx="1" fill="#1f78c1"/><rect x="3.0" y="9.5" width="3.2" height="2.8" fill="#999"/><rect x="7.8" y="9.5" width="3.2" height="2.8" fill="#999"/><rect x="12.6" y="9.5" width="3.2" height="2.8" fill="#777"/><rect x="3.0" y="13.5" width="3.2" height="2.8" fill="#999"/><rect x="7.8" y="13.5" width="3.2" height="2.8" fill="#999"/><rect x="12.6" y="13.5" width="3.2" height="2.8" fill="#777"/><rect x="3.0" y="17.5" width="3.2" height="2.8" fill="#999"/><rect x="7.8" y="17.5" width="3.2" height="2.8" fill="#999"/><rect x="12.6" y="17.5" width="3.2" height="2.8" fill="#777"/><rect x="3.0" y="21.5" width="3.2" height="2.8" fill="#999"/><rect x="7.8" y="21.5" width="3.2" height="2.8" fill="#999"/><rect x="12.6" y="21.5" width="3.2" height="2.8" fill="#777"/></svg>
<svg class="r" style="left:1198.5px;top:77.5px;" width="13" height="17" viewBox="0 0 13 17"><rect x="1" y="1" width="11" height="15" rx="1.5" fill="#fff" stroke="#707070" stroke-width="1.2"/><rect x="2.5" y="2.8" width="8" height="2.5" fill="#1f78c1"/><rect x="2.5" y="6.5" width="2" height="1.8" fill="#6a6a6a"/><rect x="5.5" y="6.5" width="2" height="1.8" fill="#6a6a6a"/><rect x="8.5" y="6.5" width="2" height="1.8" fill="#6a6a6a"/><rect x="2.5" y="9.4" width="2" height="1.8" fill="#6a6a6a"/><rect x="5.5" y="9.4" width="2" height="1.8" fill="#6a6a6a"/><rect x="8.5" y="9.4" width="2" height="1.8" fill="#6a6a6a"/><rect x="2.5" y="12.3" width="2" height="1.8" fill="#6a6a6a"/><rect x="5.5" y="12.3" width="2" height="1.8" fill="#6a6a6a"/><rect x="8.5" y="12.3" width="2" height="1.8" fill="#6a6a6a"/></svg>
<svg class="r" style="left:1196.5px;top:109px;" width="17" height="17" viewBox="0 0 17 17"><path d="M1 1H15.5V9M1 1V12.5H9" fill="#fff" stroke="#888" stroke-width="1"/><path d="M1 4.5H15.5M1 8.5H9M5.5 1V12.5M10 1V6" stroke="#aaa" stroke-width="1"/><rect x="10.2" y="6.5" width="6" height="9.5" rx="1" fill="#fff" stroke="#707070" stroke-width="1"/><rect x="11.5" y="8" width="3.5" height="1.5" fill="#1f78c1"/><path d="M11.5 11.5H12.5M14 11.5H15M11.5 13.5H12.5M14 13.5H15" stroke="#777" stroke-width="1"/></svg>
<svg class="r" style="left:90.5px;top:177px;" width="8" height="5" viewBox="0 0 8 5"><path d="M0 0H7.5L3.75 4.2Z" fill="#6d6d6d"/></svg>
<div class="r" style="left:119px;top:175px;width:2px;height:2px;background:#a0a0a0;"></div>
<div class="r" style="left:119px;top:179.5px;width:2px;height:2px;background:#a0a0a0;"></div>
<div class="r" style="left:119px;top:184px;width:2px;height:2px;background:#a0a0a0;"></div>
<svg class="r" style="left:148px;top:175px;" width="12" height="11" viewBox="0 0 12 11"><path d="M1 0.5L11 10.5M11 0.5L1 10.5" stroke="#b4b4b4" stroke-width="1.3"/></svg>
<svg class="r" style="left:184px;top:174px;" width="13" height="12" viewBox="0 0 13 12"><path d="M1 6.5L4.5 10.5L12 1.5" fill="none" stroke="#b4b4b4" stroke-width="1.6"/></svg>
<div class="t" style="left:219px;top:169px;font-family:'Liberation Serif',serif;font-style:italic;font-size:15px;line-height:20px;color:#555;">f<span style="font-size:11px">x</span></div>
<svg class="r" style="left:1247px;top:176px;" width="10" height="6" viewBox="0 0 10 6"><path d="M1 1L5 5L9 1" fill="none" stroke="#555" stroke-width="1.6"/></svg>
<svg class="r" style="left:10px;top:207px;" width="13" height="13" viewBox="0 0 13 13"><path d="M12.5 0.5V12.5H0.5Z" fill="#b4b4b4"/></svg>
<div class="r" style="left:1243px;top:203px;width:21px;height:474px;background:#e6e6e6;"></div>
<div class="r" style="left:1247px;top:205px;width:15px;height:15px;background:#ffffff;border:1px solid #c6c6c6;box-sizing:border-box;"></div>
<svg class="r" style="left:1250px;top:210px;" width="9" height="5" viewBox="0 0 9 5"><path d="M0 5H9L4.5 0Z" fill="#777"/></svg>
<div class="r" style="left:1247px;top:221px;width:15px;height:418px;background:#ffffff;border:1px solid #ababab;box-sizing:border-box;"></div>
<div class="r" style="left:1247px;top:639px;width:15px;height:24px;background:#dcdcdc;"></div>
<div class="r" style="left:1247px;top:663px;width:15px;height:14px;background:#ffffff;border:1px solid #c6c6c6;box-sizing:border-box;"></div>
<svg class="r" style="left:1250px;top:668px;" width="9" height="5" viewBox="0 0 9 5"><path d="M0 0H9L4.5 5Z" fill="#777"/></svg>
<div class="r" style="left:758px;top:685px;width:2px;height:2px;background:#a0a0a0;"></div>
<div class="r" style="left:758px;top:689.5px;width:2px;height:2px;background:#a0a0a0;"></div>
<div class="r" style="left:758px;top:694px;width:2px;height:2px;background:#a0a0a0;"></div>
<div class="r" style="left:775px;top:683px;width:15px;height:15px;background:#ffffff;border:1px solid #ababab;box-sizing:border-box;"></div>
<svg class="r" style="left:779px;top:686px;" width="5" height="9" viewBox="0 0 5 9"><path d="M5 0V9L0 4.5Z" fill="#555"/></svg>
<div class="r" style="left:790px;top:683px;width:399px;height:15px;background:#ffffff;border:1px solid #ababab;box-sizing:border-box;"></div>
<div class="r" style="left:1189px;top:684px;width:40px;height:13px;background:#dcdcdc;"></div>
<div class="r" style="left:1231px;top:683px;width:15px;height:15px;background:#ffffff;border:1px solid #c6c6c6;box-sizing:border-box;"></div>
<svg class="r" style="left:1236px;top:686px;" width="5" height="9" viewBox="0 0 5 9"><path d="M0 0V9L5 4.5Z" fill="#555"/></svg>
<svg class="r" style="left:25px;top:685px;" width="5" height="9" viewBox="0 0 5 9"><path d="M5 0V9L0 4.5Z" fill="#c0c0c0"/></svg>
<svg class="r" style="left:54px;top:685px;" width="5" height="9" viewBox="0 0 5 9"><path d="M0 0V9L5 4.5Z" fill="#c0c0c0"/></svg>
<svg class="r" style="left:237px;top:681px;" width="18" height="18" viewBox="0 0 18 18"><circle cx="8.5" cy="8.5" r="7.5" fill="none" stroke="#777" stroke-width="1.3"/><path d="M8.5 4.5V12.5M4.5 8.5H12.5" stroke="#777" stroke-width="1.6"/></svg>
<svg class="r" style="left:162px;top:708px;" width="14" height="14" viewBox="0 0 14 14"><circle cx="3.5" cy="3.5" r="3" fill="#555"/><path d="M7 2H13V13H1V7" fill="none" stroke="#666" stroke-width="1"/><path d="M3 9H5M6 9H8M9 9H11M3 11H5M6 11H8M9 11H11M9 5H11" stroke="#666" stroke-width="1"/></svg>
<svg class="r" style="left:977px;top:708px;" width="14" height="14" viewBox="0 0 14 14"><rect x="0.5" y="0.5" width="12" height="12" fill="none" stroke="#666" stroke-width="1.1"/><path d="M4.5 0.5V12.5M8.5 0.5V12.5M0.5 4.5H12.5M0.5 8.5H12.5" stroke="#666" stroke-width="1.1"/></svg>
<svg class="r" style="left:1015px;top:708px;" width="15" height="14" viewBox="0 0 15 14"><rect x="0.5" y="0.5" width="13" height="12" fill="none" stroke="#666" stroke-width="1"/><rect x="3.5" y="2.5" width="7" height="8" fill="none" stroke="#666" stroke-width="1"/><path d="M5 4.5H9M5 6.5H9M5 8.5H9" stroke="#666" stroke-width="0.9"/></svg>
<svg class="r" style="left:1053px;top:708px;" width="15" height="14" viewBox="0 0 15 14"><rect x="0.5" y="0.5" width="13" height="12" fill="none" stroke="#666" stroke-width="1"/><path d="M4.5 0.5V7.5M8.5 0.5V7.5M0.5 7.5H8.5" fill="none" stroke="#666" stroke-width="1"/></svg>
<div class="r" style="left:1084px;top:714px;width:7px;height:2px;background:#555;"></div>
<div class="r" style="left:1094px;top:715px;width:100px;height:1px;background:#a0a0a0;"></div>
<div class="r" style="left:1142px;top:709px;width:5px;height:11px;background:#666;"></div>
<svg class="r" style="left:1198px;top:711px;" width="8" height="8" viewBox="0 0 8 8"><path d="M4 0V8M0 4H8" stroke="#555" stroke-width="1.6"/></svg>
<div class="r" style="left:332px;top:36px;width:81px;height:27px;border:3px solid #f0101a;box-sizing:border-box;border-radius:9px;"></div>
<div class="r" style="left:953px;top:89px;width:23px;height:25px;border:3px solid #f0101a;box-sizing:border-box;border-radius:11px;"></div>
<div class="r" style="left:828px;top:113px;width:177px;height:76px;background:#fff;border:1px solid #c6c6c6;box-sizing:border-box;box-shadow:1px 2px 3px rgba(0,0,0,0.15);"></div>
<svg class="r" style="left:833px;top:118px;" width="18" height="18" viewBox="0 0 18 18"><path d="M1 4.2L3.6 7L8.5 1" fill="none" stroke="#1f78c1" stroke-width="1.7"/><path d="M10.9 4.6L16.5 10L10.9 15.4L5.3 10Z" fill="#f8c17b" stroke="#f8c17b" stroke-width="2.2" stroke-linejoin="round"/><rect x="10.2" y="6.3" width="1.7" height="5.2" fill="#ef4b3b"/><rect x="10.2" y="12.4" width="1.7" height="1.7" fill="#ef4b3b"/></svg>
<div class="t" style="top:119.00px;line-height:16px;font-size:12px;color:#444;left:862.40px;"><u>П</u>роверка ошибок...</div>
<svg class="r" style="left:833px;top:142px;" width="18" height="18" viewBox="0 0 18 18"><path d="M9 1.8L16.3 9L9 16.2L1.7 9Z" fill="#f8c17b" stroke="#f8c17b" stroke-width="2.4" stroke-linejoin="round"/><rect x="8.1" y="4.8" width="1.9" height="5.6" fill="#3f3f4f"/><rect x="8.1" y="11.5" width="1.9" height="1.9" fill="#3f3f4f"/></svg>
<div class="t" style="top:142.10px;line-height:17px;font-size:12.6px;color:#444;left:862.40px;">Источ<u>н</u>ик ошибки</div>
<div class="r" style="left:829px;top:163px;width:175px;height:25px;background:#c6c6c6;"></div>
<svg class="r" style="left:833px;top:166px;" width="19" height="17" viewBox="0 0 19 17"><rect x="1.5" y="2.5" width="6" height="4.5" fill="#fff" stroke="#555" stroke-width="1.1"/><rect x="10.5" y="10.5" width="6" height="4.5" fill="#fff" stroke="#555" stroke-width="1.1"/><path d="M12 2.5A4 4 0 0 1 16.2 7.5" fill="none" stroke="#1f78c1" stroke-width="1.5"/><path d="M10 2.5L13 0V5Z" fill="#1f78c1"/><path d="M1.8 9.5A4 4 0 0 0 5.8 14" fill="none" stroke="#1f78c1" stroke-width="1.5"/><path d="M8.3 14L5.3 11.3V16.7Z" fill="#1f78c1"/></svg>
<div class="t" style="top:166.60px;line-height:16px;font-size:12.25px;color:#333;left:862.40px;"><u>Ц</u>иклические ссылки</div>
<svg class="r" style="left:990px;top:171px;" width="5" height="8" viewBox="0 0 5 8"><path d="M0 0V8L4.5 4Z" fill="#6d6d6d"/></svg>
<div class="r" style="left:828px;top:162px;width:178px;height:27px;border:3px solid #f0101a;box-sizing:border-box;border-radius:9px;"></div>
<div class="r" style="left:1004px;top:164px;width:73px;height:27px;background:#fff;border:1px solid #d0d0d0;box-sizing:border-box;box-shadow:1px 2px 3px rgba(0,0,0,0.12);"></div>
<div class="r" style="left:1007px;top:165px;width:20px;height:22px;background:#c6c6c6;border:1px solid #a6a6a6;box-sizing:border-box;"></div>
<svg class="r" style="left:1011px;top:171px;" width="12" height="10" viewBox="0 0 12 10"><path d="M1 5L4.2 8.5L11 1" fill="none" stroke="#444" stroke-width="1.3"/></svg>
<div class="t" style="top:168.80px;line-height:15px;font-size:11px;color:#555;left:1036.90px;">$G$13</div>
</body></html>
